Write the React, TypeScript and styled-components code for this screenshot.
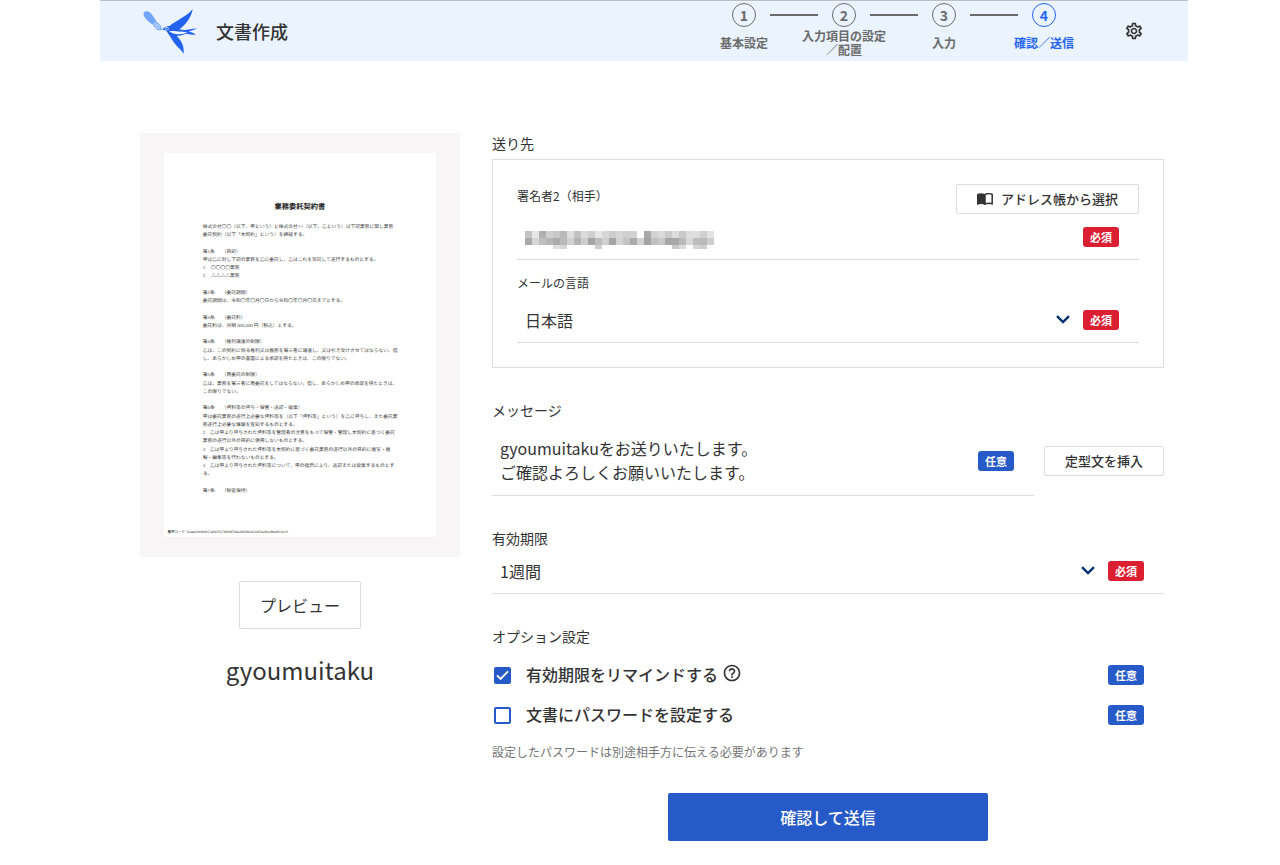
import React from "react";
import styled, { createGlobalStyle } from "styled-components";
import { MdHelpOutline, MdOutlineSettings } from "react-icons/md";

const color = {
  text: "#333333",
  sub: "#757575",
  step: "#6b6b6b",
  line: "#dddddd",
  primary: "#265ac8",
  active: "#2463f0",
  danger: "#dc1e32",
  header: "#eaf3fe",
  navy: "#00306e",
};

const GlobalStyle = createGlobalStyle`
  *, *::before, *::after { box-sizing: border-box; }
  body {
    margin: 0;
    background: #ffffff;
    color: ${color.text};
    font-family: "Noto Sans CJK JP", "Noto Sans", sans-serif;
    font-size: 16px;
    line-height: 24px;
  }
  button, select, textarea, input { font: inherit; color: inherit; }
  h1, h2, p, ol { margin: 0; padding: 0; }
`;

const Page = styled.div`
  padding: 0 92px 24px 100px;
`;

/* ---------- header ---------- */

const Header = styled.header`
  display: flex;
  align-items: center;
  height: 61px;
  padding: 0 34px 0 43px;
  border-top: 1px solid #bfbfc1;
  background: ${color.header};
`;

const LogoLink = styled.a`
  display: block;
  width: 54px;
  height: 45px;
`;

const Title = styled.h1`
  margin-left: 19px;
  font-size: 18px;
  font-weight: 500;
  line-height: 26px;
`;

const Steps = styled.ol`
  display: flex;
  align-self: flex-start;
  margin-left: auto;
  padding-top: 2px;
  list-style: none;
`;

const Step = styled.li<{ $active?: boolean }>`
  width: 100px;
  color: ${(p) => (p.$active ? color.active : color.step)};
  font-size: 12px;
  font-weight: 700;
  line-height: 14px;
  text-align: center;
`;

const Marker = styled.div<{ $first?: boolean; $last?: boolean }>`
  display: flex;
  align-items: center;
  gap: 14px;

  &::before,
  &::after {
    content: "";
    flex: 1;
    height: 2px;
    background: ${color.step};
  }
  &::before {
    visibility: ${(p) => (p.$first ? "hidden" : "visible")};
  }
  &::after {
    visibility: ${(p) => (p.$last ? "hidden" : "visible")};
  }
`;

const Circle = styled.span`
  display: flex;
  align-items: center;
  justify-content: center;
  width: 24px;
  height: 24px;
  border: 1px solid currentColor;
  border-radius: 50%;
  font-size: 14px;
`;

const StepLabel = styled.div`
  display: flex;
  align-items: center;
  justify-content: center;
  height: 28px;
  margin-top: 2px;
  white-space: nowrap;
`;

const IconButton = styled.button`
  display: flex;
  align-items: center;
  justify-content: center;
  padding: 0;
  border: 0;
  background: transparent;
  cursor: pointer;
`;

const SettingsButton = styled(IconButton)`
  width: 40px;
  height: 40px;
  margin-left: 20px;
`;

const HelpButton = styled(IconButton)`
  padding-bottom: 4px;
`;

/* ---------- layout ---------- */

const Main = styled.main`
  display: grid;
  grid-template-columns: 320px minmax(0, 1fr);
  column-gap: 32px;
  padding: 72px 24px 0 40px;
`;

const Aside = styled.aside`
  display: flex;
  flex-direction: column;
  align-items: center;
`;

const Thumbnail = styled.div`
  align-self: stretch;
  padding: 20px 24px;
  background: #f7f5f6;

  svg {
    display: block;
    width: 100%;
    background: #ffffff;
  }
`;

const Button = styled.button`
  display: inline-flex;
  align-items: center;
  justify-content: center;
  gap: 8px;
  height: 30px;
  padding: 0 20px;
  border: 1px solid ${color.line};
  border-radius: 2px;
  background: #ffffff;
  font-size: 13px;
  font-weight: 500;
  line-height: 20px;
  white-space: nowrap;
  cursor: pointer;
`;

const PreviewButton = styled(Button)`
  height: 48px;
  margin-top: 24px;
  font-size: 16px;
  font-weight: 400;
`;

const FileName = styled.p`
  margin-top: 24px;
  font-size: 24px;
  line-height: 34px;
`;

const Form = styled.form`
  display: flex;
  flex-direction: column;
`;

const Section = styled.section`
  & + & {
    margin-top: 32px;
  }
`;

const Label = styled.label`
  display: block;
  padding-bottom: 2px;
  font-size: 14px;
  line-height: 20px;
`;

const Heading = styled.h2`
  padding-bottom: 2px;
  font-size: 14px;
  font-weight: 400;
  line-height: 20px;
`;

const Card = styled.div`
  margin-top: 4px;
  padding: 24px;
  border: 1px solid ${color.line};
`;

const CardHead = styled.div`
  display: flex;
  justify-content: space-between;
  margin-bottom: 2px;
`;

const SmallText = styled.span`
  font-size: 12px;
  line-height: 24px;
`;

const SmallLabel = styled.label`
  display: block;
  padding: 12px 0 5px;
  font-size: 12px;
  line-height: 22px;
`;

const Field = styled.div`
  display: flex;
  align-items: center;
  gap: 13px;
  min-height: 44px;
  padding: 0 20px 2px 8px;
  border-bottom: 1px solid ${color.line};
`;

const Badge = styled.span<{ $required?: boolean }>`
  flex: none;
  width: 36px;
  height: 20px;
  margin-left: auto;
  border-radius: 3px;
  background: ${(p) => (p.$required ? color.danger : color.primary)};
  color: #ffffff;
  font-size: 11px;
  font-weight: 700;
  line-height: 20px;
  text-align: center;
`;

const SelectBox = styled.div`
  display: grid;
  flex: 1;
  align-items: center;

  select,
  svg {
    grid-area: 1 / 1;
  }
  select {
    appearance: none;
    padding: 0;
    border: 0;
    background: transparent;
    line-height: 24px;
  }
  svg {
    justify-self: end;
    pointer-events: none;
  }
`;

const MessageRow = styled.div`
  display: flex;
  align-items: center;
  gap: 10px;
  margin-top: 4px;
`;

const MessageField = styled(Field)`
  flex: 1;
  padding-top: 10px;
  padding-bottom: 9px;
`;

const TextArea = styled.textarea`
  flex: 1;
  height: 48px;
  margin-bottom: 2px;
  padding: 0;
  border: 0;
  resize: none;
  overflow: hidden;
  background: transparent;
  line-height: 24px;
`;

const Options = styled.div`
  margin-top: 7px;
`;

const OptionRow = styled.div`
  display: flex;
  align-items: center;
  height: 40px;
  padding: 0 20px 0 2px;
`;

const OptionLabel = styled.label`
  margin: 0 4px 0 15px;
  padding-bottom: 2px;
  font-weight: 500;
`;

const CheckBox = styled.span`
  display: grid;
  width: 17px;
  height: 17px;

  input,
  svg {
    grid-area: 1 / 1;
  }
  input {
    appearance: none;
    width: 17px;
    height: 17px;
    margin: 0;
    border: 2px solid ${color.primary};
    border-radius: 2px;
    background: #ffffff;
  }
  input:checked {
    background: ${color.primary};
  }
  svg {
    z-index: 1;
    visibility: hidden;
    pointer-events: none;
  }
  input:checked + svg {
    visibility: visible;
  }
`;

const Note = styled.p`
  margin-top: 6px;
  color: ${color.sub};
  font-size: 12px;
  line-height: 22px;
`;

const SubmitButton = styled.button`
  align-self: center;
  width: 320px;
  height: 48px;
  margin-top: 30px;
  border: 0;
  border-radius: 2px;
  background: ${color.primary};
  color: #ffffff;
  font-weight: 500;
  cursor: pointer;
`;

/* ---------- drawings ---------- */

const SwallowLogo = () => (
  <svg width="54" height="45" viewBox="129 26 162 135" aria-hidden="true">
    <path
      d="M131 44C128 35 139 29 148 35C157 41 163 54 171 66L161 76C152 68 134 57 131 44Z"
      fill="#70a5fb"
    />
    <path
      d="M162 76L171 67C178 70 183 78 184 88C175 90 166 86 162 76Z"
      fill="#b5d1fd"
      stroke="#70a5fb"
      strokeWidth="3"
    />
    <path d="M159 74L169 64" stroke="#eaf3fe" strokeWidth="2" />
    <circle cx="173" cy="78" r="2.5" fill="#70a5fb" />
    <path d="M173 78L184 88" stroke="#70a5fb" strokeWidth="2" />
    <path
      d="M186 87L195 81C200 77 205 78 210 76C226 62 258 50 278 27C274 51 258 73 238 87C256 91 270 87 290 84C285 88 276 91 266 93C274 96 282 99 288 103C276 103 266 101 257 100C246 105 236 106 230 107C243 119 253 135 251 160C238 142 222 131 213 112C207 104 203 97 199 91Z"
      fill="#2463f0"
    />
    <path d="M207 92C226 92 246 94 262 96C247 103 222 106 207 92Z" fill="#f4f9ff" />
    <circle cx="201" cy="85" r="5" fill="#eaf3fe" />
    <circle cx="201" cy="85" r="3" fill="#2463f0" />
  </svg>
);

const BookIcon = () => (
  <svg width="16" height="12" viewBox="0 0 16 12" aria-hidden="true">
    <path d="M0 1.2C2.2-.1 5.8-.1 8 1.2V12C5.8 10.7 2.2 10.7 0 12Z" fill="#333" />
    <path
      d="M8 1.6C10 .5 13 .4 15.2 1.4V10.7C13 10 10 10 8 11.2Z"
      fill="none"
      stroke="#333"
      strokeWidth="1.5"
    />
  </svg>
);

const Chevron = () => (
  <svg width="14" height="9" viewBox="0 0 14 9" aria-hidden="true">
    <path d="M1 1.2L7 7L13 1.2" fill="none" stroke={color.navy} strokeWidth="2.4" />
  </svg>
);

const CheckMark = () => (
  <svg width="17" height="17" viewBox="0 0 17 17" aria-hidden="true">
    <path d="M3 8.4L6.6 12L14 4.4" fill="none" stroke="#fff" strokeWidth="1.8" />
  </svg>
);

/* Address hidden behind a mosaic: one grey level per cell, 255 is empty. */
const mosaic = [
  [196, 230, 176, 208, 200, 185, 222, 194, 220, 206, 230, 216, 205, 214, 208, 210, 255, 169, 210, 218, 203, 222, 200, 220, 222, 208, 226],
  [170, 214, 190, 182, 172, 186, 208, 180, 205, 164, 190, 208, 166, 212, 196, 172, 210, 164, 192, 200, 166, 168, 186, 216, 190, 186, 206],
  [255, 255, 255, 255, 222, 214, 255, 255, 255, 255, 206, 255, 255, 255, 255, 255, 255, 255, 255, 255, 255, 202, 220, 255, 214, 206, 255],
];

const Mosaic = () => (
  <svg width="189" height="24" viewBox="0 -6 189 24" role="img" aria-label="メールアドレス">
    {mosaic.map((row, y) =>
      row.map((v, x) => (
        <rect
          key={`${x}-${y}`}
          x={x * 7}
          y={y * 7}
          width="7"
          height={y === 2 ? 4 : 7}
          fill={`rgb(${v},${v},${v})`}
        />
      ))
    )}
  </svg>
);

const contract = [
  "株式会社〇〇（以下、甲という）と株式会社××（以下、乙という）は下記業務に関し業務",
  "委託契約（以下「本契約」という）を締結する。",
  "",
  "第1条　　（目的）",
  "甲は乙に対し下記の業務を乙に委託し、乙はこれを受託して遂行するものとする。",
  "1.　〇〇〇〇業務",
  "2.　△△△△業務",
  "",
  "第2条　　（委託期間）",
  "委託期間は、令和〇年〇月〇日から令和〇年〇月〇日までとする。",
  "",
  "第3条　　（委託料）",
  "委託料は、月額 000,000 円（税込）とする。",
  "",
  "第4条　　（権利譲渡の制限）",
  "乙は、この契約に係る権利又は義務を第三者に譲渡し、又は引き受けさせてはならない。但",
  "し、あらかじめ甲の書面による承認を得たときは、この限りでない。",
  "",
  "第5条　　（再委託の制限）",
  "乙は、業務を第三者に再委託をしてはならない。但し、あらかじめ甲の承認を得たときは、",
  "この限りでない。",
  "",
  "第6条　　（資料等の貸与・保管・返却・破棄）",
  "甲は委託業務の遂行上必要な資料等を（以下「資料等」という）を乙に貸与し、また委託業",
  "務遂行上必要な情報を告知するものとする。",
  "2　乙は甲より貸与された資料等を管理者の注意をもって保管・管理し本契約に基づく委託",
  "業務の遂行以外の目的に使用しないものとする。",
  "3　乙は甲より貸与された資料等を本契約に基づく委託業務の遂行以外の目的に複写・複",
  "製・編集等を行わないものとする。",
  "4　乙は甲より貸与された資料等について、甲の指示により、返却または廃棄するものとす",
  "る。",
  "",
  "第7条　　（秘密保持）",
];

const DocumentPage = () => (
  <svg
    viewBox="0 0 1088 1536"
    role="img"
    aria-label="業務委託契約書"
    fontFamily='"Liberation Serif", "Noto Sans CJK JP", serif'
    fontSize="19"
    textRendering="geometricPrecision"
    fill="#444"
  >
    <text x="544" y="222" textAnchor="middle" fontSize="29" fontWeight="700" fill="#222">
      業務委託契約書
    </text>
    {contract.map((line, i) =>
      line ? (
        <text key={i} x="155" y={299 + i * 33}>
          {line}
        </text>
      ) : null
    )}
    <text x="14" y="1520" fontSize="14" fill="#222">
      書類コード: 0aaee16b68c837ae9e7b178d0dd78da2d0f8bcd126d5e2d6cd8e4b01fc10
    </text>
  </svg>
);

/* ---------- screen ---------- */

const steps: { id: number; label: React.ReactNode }[] = [
  { id: 1, label: "基本設定" },
  {
    id: 2,
    label: (
      <span>
        入力項目の設定
        <br />
        ／配置
      </span>
    ),
  },
  { id: 3, label: "入力" },
  { id: 4, label: "確認／送信" },
];

export default function App() {
  return (
    <>
      <GlobalStyle />
      <Page>
        <Header>
          <LogoLink href="#" aria-label="ホーム">
            <SwallowLogo />
          </LogoLink>
          <Title>文書作成</Title>
          <Steps>
            {steps.map((s) => (
              <Step key={s.id} $active={s.id === 4}>
                <Marker $first={s.id === 1} $last={s.id === 4}>
                  <Circle>{s.id}</Circle>
                </Marker>
                <StepLabel>{s.label}</StepLabel>
              </Step>
            ))}
          </Steps>
          <SettingsButton type="button" aria-label="設定">
            <MdOutlineSettings size={20} />
          </SettingsButton>
        </Header>

        <Main>
          <Aside>
            <Thumbnail>
              <DocumentPage />
            </Thumbnail>
            <PreviewButton type="button">プレビュー</PreviewButton>
            <FileName>gyoumuitaku</FileName>
          </Aside>

          <Form onSubmit={(e) => e.preventDefault()}>
            <Section>
              <Heading>送り先</Heading>
              <Card>
                <CardHead>
                  <SmallText>署名者2（相手）</SmallText>
                  <Button type="button">
                    <BookIcon />
                    アドレス帳から選択
                  </Button>
                </CardHead>
                <Field>
                  <Mosaic />
                  <Badge $required>必須</Badge>
                </Field>
                <SmallLabel htmlFor="language">メールの言語</SmallLabel>
                <Field>
                  <SelectBox>
                    <select id="language" defaultValue="ja">
                      <option value="ja">日本語</option>
                    </select>
                    <Chevron />
                  </SelectBox>
                  <Badge $required>必須</Badge>
                </Field>
              </Card>
            </Section>

            <Section>
              <Label htmlFor="message">メッセージ</Label>
              <MessageRow>
                <MessageField>
                  <TextArea
                    id="message"
                    defaultValue={"gyoumuitakuをお送りいたします。\nご確認よろしくお願いいたします。"}
                  />
                  <Badge>任意</Badge>
                </MessageField>
                <Button type="button">定型文を挿入</Button>
              </MessageRow>
            </Section>

            <Section>
              <Label htmlFor="expiry">有効期限</Label>
              <Field>
                <SelectBox>
                  <select id="expiry" defaultValue="1w">
                    <option value="1w">1週間</option>
                  </select>
                  <Chevron />
                </SelectBox>
                <Badge $required>必須</Badge>
              </Field>
            </Section>

            <Section>
              <Heading>オプション設定</Heading>
              <Options>
                <OptionRow>
                  <CheckBox>
                    <input id="remind" type="checkbox" defaultChecked />
                    <CheckMark />
                  </CheckBox>
                  <OptionLabel htmlFor="remind">有効期限をリマインドする</OptionLabel>
                  <HelpButton type="button" aria-label="ヘルプ">
                    <MdHelpOutline size={20} />
                  </HelpButton>
                  <Badge>任意</Badge>
                </OptionRow>
                <OptionRow>
                  <CheckBox>
                    <input id="password" type="checkbox" />
                    <CheckMark />
                  </CheckBox>
                  <OptionLabel htmlFor="password">文書にパスワードを設定する</OptionLabel>
                  <Badge>任意</Badge>
                </OptionRow>
              </Options>
              <Note>設定したパスワードは別途相手方に伝える必要があります</Note>
            </Section>

            <SubmitButton type="submit">確認して送信</SubmitButton>
          </Form>
        </Main>
      </Page>
    </>
  );
}
